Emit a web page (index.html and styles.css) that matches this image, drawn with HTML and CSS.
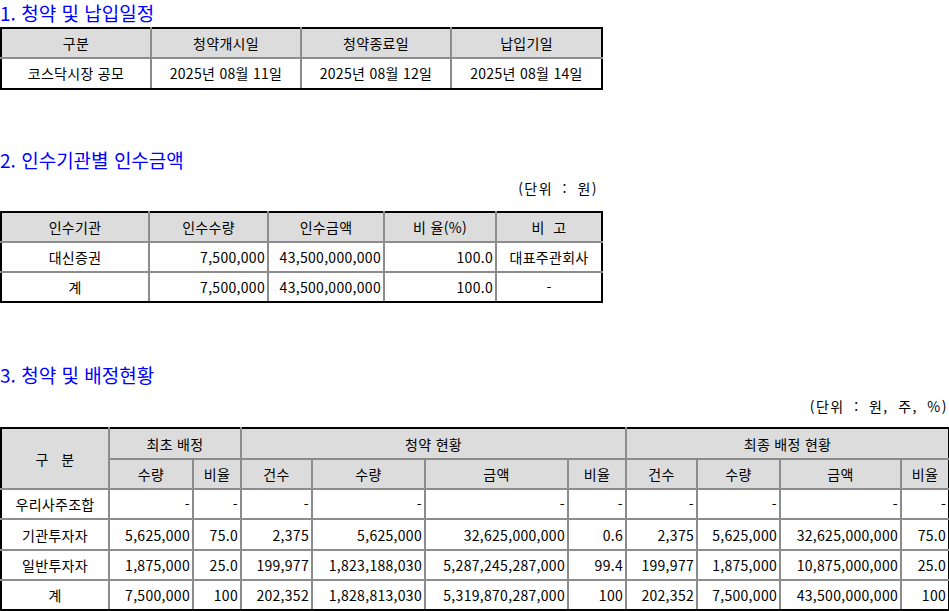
FILE: index.html
```html
<!DOCTYPE html>
<html lang="ko">
<head>
<meta charset="utf-8">
<title>청약 및 배정현황</title>
<link rel="stylesheet" href="styles.css">
</head>
<body>
<h2 class="title s1">1. 청약 및 납입일정</h2>
<table class="grid t1">
  <colgroup><col class="c150"><col class="c150"><col class="c150"><col class="c151"></colgroup>
  <tr class="head"><th>구분</th><th>청약개시일</th><th>청약종료일</th><th>납입기일</th></tr>
  <tr><td class="c">코스닥시장 공모</td><td class="c">2025년 08월 11일</td><td class="c">2025년 08월 12일</td><td class="c">2025년 08월 14일</td></tr>
</table>

<h2 class="title s2">2. 인수기관별 인수금액</h2>
<div class="unit u1">(단위 : 원)</div>
<table class="grid t2">
  <colgroup><col class="c148"><col class="c119"><col class="c116"><col class="c112"><col class="c106"></colgroup>
  <tr class="head"><th>인수기관</th><th>인수수량</th><th>인수금액</th><th>비 율(%)</th><th>비&nbsp;&nbsp;고</th></tr>
  <tr><td class="c">대신증권</td><td class="r">7,500,000</td><td class="r">43,500,000,000</td><td class="r">100.0</td><td class="c">대표주관회사</td></tr>
  <tr><td class="c">계</td><td class="r">7,500,000</td><td class="r">43,500,000,000</td><td class="r">100.0</td><td class="c">-</td></tr>
</table>

<h2 class="title s3">3. 청약 및 배정현황</h2>
<div class="unit u2">(단위 : 원, 주, %)</div>
<table class="grid t3">
  <colgroup>
    <col class="c108"><col class="c84"><col class="c48"><col class="c71"><col class="c113"><col class="c143"><col class="c58"><col class="c71"><col class="c83"><col class="c121"><col class="c48">
  </colgroup>
  <tr class="head"><th rowspan="2">구&nbsp;&nbsp;&nbsp;분</th><th colspan="2">최초 배정</th><th colspan="4">청약 현황</th><th colspan="4">최종 배정 현황</th></tr>
  <tr class="head"><th>수량</th><th>비율</th><th>건수</th><th>수량</th><th>금액</th><th>비율</th><th>건수</th><th>수량</th><th>금액</th><th>비율</th></tr>
  <tr><td class="c">우리사주조합</td><td class="r">-</td><td class="r">-</td><td class="r">-</td><td class="r">-</td><td class="r">-</td><td class="r">-</td><td class="r">-</td><td class="r">-</td><td class="r">-</td><td class="r">-</td></tr>
  <tr><td class="c">기관투자자</td><td class="r">5,625,000</td><td class="r">75.0</td><td class="r">2,375</td><td class="r">5,625,000</td><td class="r">32,625,000,000</td><td class="r">0.6</td><td class="r">2,375</td><td class="r">5,625,000</td><td class="r">32,625,000,000</td><td class="r">75.0</td></tr>
  <tr><td class="c">일반투자자</td><td class="r">1,875,000</td><td class="r">25.0</td><td class="r">199,977</td><td class="r">1,823,188,030</td><td class="r">5,287,245,287,000</td><td class="r">99.4</td><td class="r">199,977</td><td class="r">1,875,000</td><td class="r">10,875,000,000</td><td class="r">25.0</td></tr>
  <tr><td class="c">계</td><td class="r">7,500,000</td><td class="r">100</td><td class="r">202,352</td><td class="r">1,828,813,030</td><td class="r">5,319,870,287,000</td><td class="r">100</td><td class="r">202,352</td><td class="r">7,500,000</td><td class="r">43,500,000,000</td><td class="r">100</td></tr>
</table>
</body>
</html>
```

FILE: styles.css
```css
html, body {
  margin: 0;
  padding: 0;
  background: #ffffff;
}
body {
  font-family: "Noto Sans CJK KR", "Noto Sans", sans-serif;
  font-size: 14px;
  color: #000000;
  letter-spacing: 0.3px;
}
.title {
  margin: 0;
  font-size: 19px;
  line-height: 24px;
  font-weight: 400;
  color: #0000ff;
  letter-spacing: 0;
}
.s1 { line-height: 26px; }
.s2 { margin-top: 58px; }
.s3 { margin-top: 60px; }
.unit {
  line-height: 16px;
  text-align: right;
  letter-spacing: 1.5px;
  word-spacing: 4px;
}
.u1 { width: 598px; margin-top: 8px; }
.u2 { width: 948px; margin-top: 11px; }

.grid {
  border-collapse: collapse;
  table-layout: fixed;
  border: 2px solid #000000;
}
.t1 { width: 601px; margin-top: 1px; }
.t2 { width: 601px; margin-top: 15px; }
.t3 { width: 949px; margin-top: 13px; }

.grid th, .grid td {
  border: 2px solid #8c8c8c;
  height: 28.3px;
  padding: 0 2px 0 2px;
  line-height: 16px;
  white-space: nowrap;
  vertical-align: middle;
  overflow: hidden;
}
.grid th {
  font-weight: 400;
  background: #dcdcdc;
  text-align: center;
}
.grid tr:first-child th { border-top-color: #000000; }
.grid tr > :first-child { border-left-color: #000000; }
.grid tr > :last-child { border-right-color: #000000; }
.grid tr:last-child td { border-bottom-color: #000000; }
.t3 tr:first-child th:last-child { border-right-color: #000000; }

.c { text-align: center; }
.r { text-align: right; }

.c150 { width: 150px; }
.c151 { width: 151px; }
.c148 { width: 148px; }
.c119 { width: 119px; }
.c116 { width: 116px; }
.c112 { width: 112px; }
.c106 { width: 106px; }
.c108 { width: 108px; }
.c84 { width: 84px; }
.c48 { width: 48px; }
.c71 { width: 71px; }
.c113 { width: 113px; }
.c143 { width: 143px; }
.c58 { width: 58px; }
.c83 { width: 83px; }
.c121 { width: 121px; }
```
